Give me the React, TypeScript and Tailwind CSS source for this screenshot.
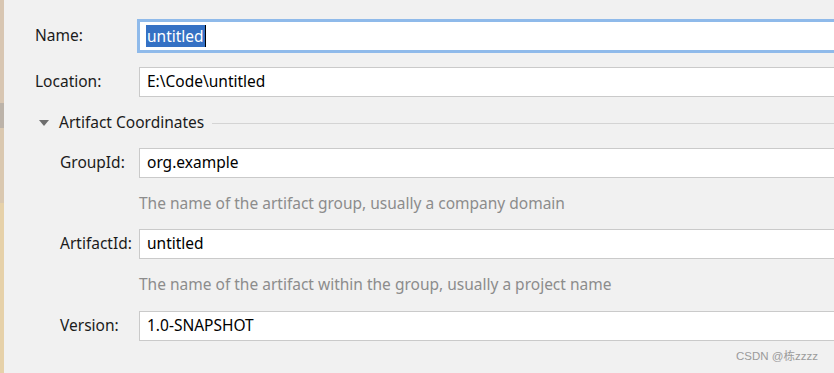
import React from "react";

type FieldProps = {
  label: string;
  value: string;
  labelWidth: string;
};

// plain text box, right side runs off the window
function Field({ label, value, labelWidth }: FieldProps) {
  return (
    <div className="flex items-center h-[30px]">
      <div className={`${labelWidth} shrink-0 text-[15.5px] text-[#1b1b1b]`}>{label}</div>
      <div className="flex-1 h-full -mr-[4px] bg-white border border-[#cacaca] flex items-center pl-[7px] text-[15.5px] text-black">
        {value}
      </div>
    </div>
  );
}

function Help({ text, height }: { text: string; height: string }) {
  return (
    <div className={`flex items-center ${height} pl-[79px] text-[15.5px] text-[#8c8c8c]`}>
      {text}
    </div>
  );
}

export default function App() {
  return (
    <div
      className="relative w-[834px] h-[373px] overflow-hidden bg-[#f1f1f1] flex"
      style={{ fontFamily: '"Noto Sans", "Open Sans", sans-serif' }}
    >
      {/* left window edge */}
      <div className="w-[4px] shrink-0 flex flex-col">
        <div className="h-[103px] bg-[#d8c6b2]" />
        <div className="h-[25px] bg-[#bcb3a9]" />
        <div className="h-[75px] bg-[#dac8b0]" />
        <div className="flex-1 bg-[#e6d1a9]" />
      </div>

      <div className="flex-1 pt-[19px]">
        {/* NAME */}
        <div className="flex items-center h-[34px] pl-[31px]">
          <div className="w-[102px] shrink-0 text-[15.5px] text-[#1b1b1b]">Name:</div>
          <div className="flex-1 h-full -mr-[4px] bg-white border-[3px] border-[#8fbaea] flex items-center pl-[6px]">
            <span className="bg-[#3571c4] text-white text-[15.5px] leading-[22px] px-[1px]">untitled</span>
            <span className="w-[1px] h-[22px] bg-black" />
          </div>
        </div>

        {/* LOCATION */}
        <div className="mt-[14px] pl-[31px]">
          <Field label="Location:" value="E:\Code\untitled" labelWidth="w-[104px]" />
        </div>

        {/* ARTIFACT HEADER */}
        <div className="mt-[14px] h-[24px] flex items-center pl-[35px]">
          <svg width="10" height="6" viewBox="0 0 10 6" className="shrink-0">
            <polygon points="0,0 10,0 5,6" fill="#6e6e6e" />
          </svg>
          <span className="ml-[10px] text-[15.5px] text-[#1b1b1b]">Artifact Coordinates</span>
          <div className="flex-1 ml-[8px] h-[1px] bg-[#d4d4d4]" />
        </div>

        {/* COORDINATES */}
        <div className="mt-[13px] pl-[56px]">
          <Field label="GroupId:" value="org.example" labelWidth="w-[79px]" />
          <Help text="The name of the artifact group, usually a company domain" height="h-[51px]" />
          <Field label="ArtifactId:" value="untitled" labelWidth="w-[79px]" />
          <Help text="The name of the artifact within the group, usually a project name" height="h-[52px]" />
          <Field label="Version:" value="1.0-SNAPSHOT" labelWidth="w-[79px]" />
        </div>
      </div>

      {/* watermark */}
      <div
        className="absolute right-[16px] bottom-[8px] text-[11.5px] text-[#9b9b9b]"
        style={{ fontFamily: '"Liberation Sans", "Noto Sans CJK SC", sans-serif' }}
      >
        CSDN @栋zzzz
      </div>
    </div>
  );
}
